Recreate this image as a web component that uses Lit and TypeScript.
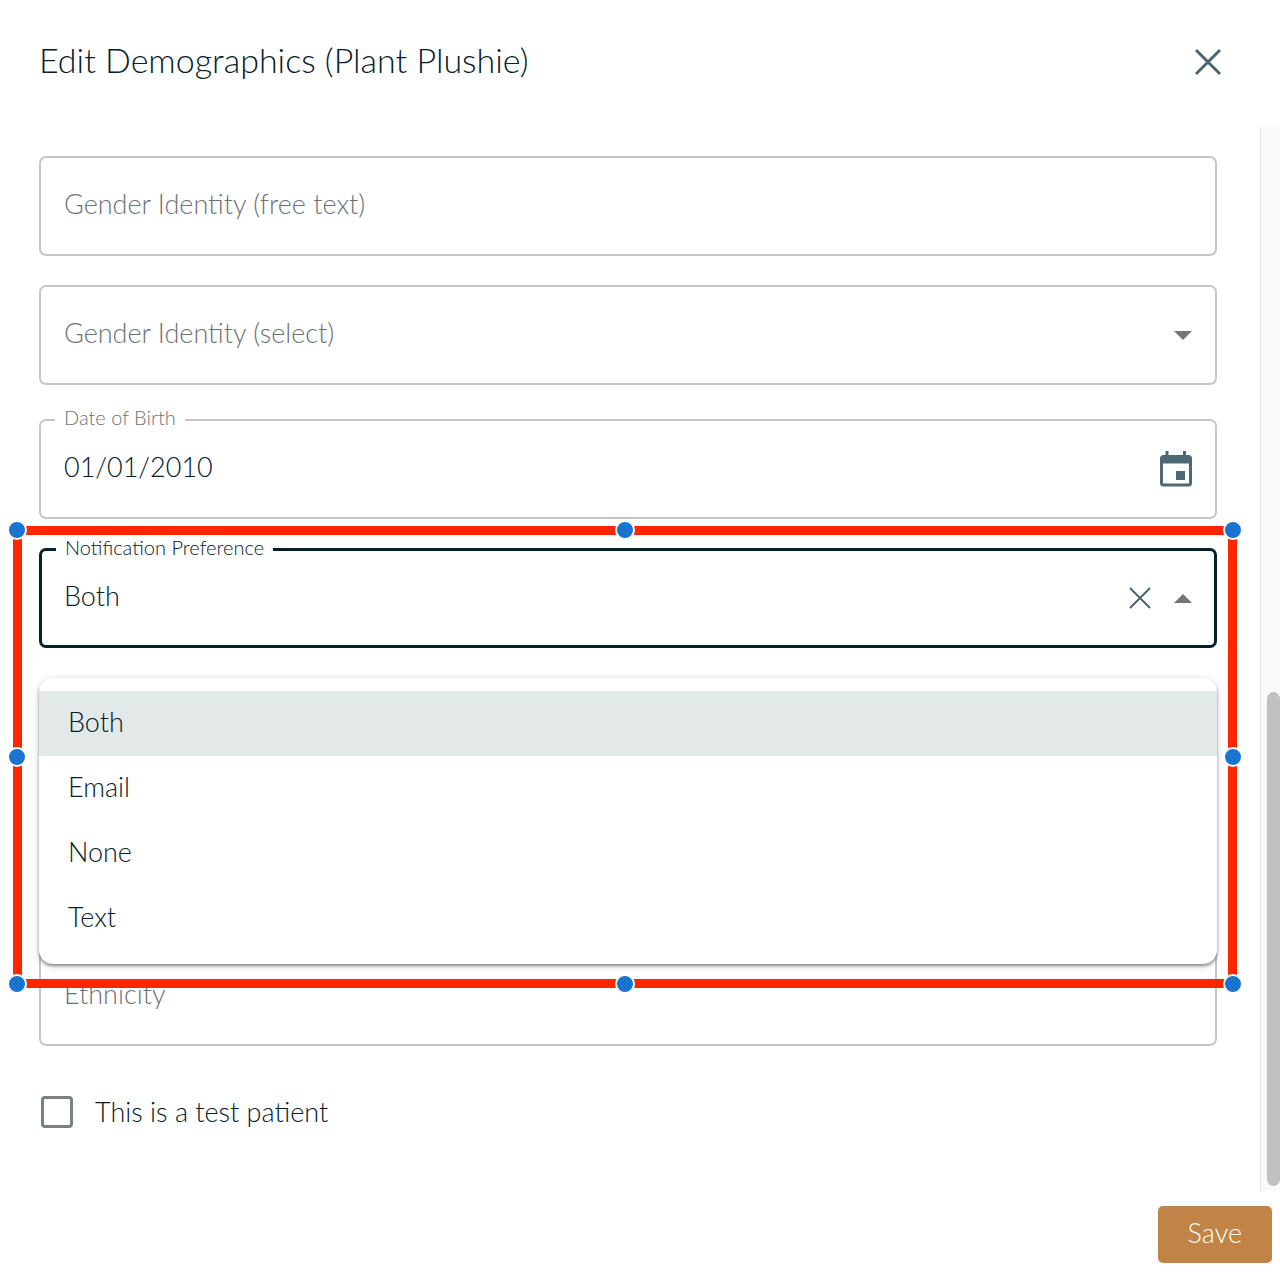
import { LitElement, html, css, svg } from "lit";
import { customElement, property, state } from "lit/decorators.js";

const closeIcon = (size: number, stroke: number) => html`<svg width=${size} height=${size} viewBox="0 0 ${size} ${size}" aria-hidden="true">
  ${svg`<path d="M${stroke - 1} ${stroke - 1}L${size - stroke + 1} ${size - stroke + 1}M${size - stroke + 1} ${stroke - 1}L${stroke - 1} ${size - stroke + 1}"
    fill="none" stroke="#4c656e" stroke-width=${stroke} />`}
</svg>`;

const arrowIcon = (up: boolean) => html`<svg width="18" height="9" viewBox="0 0 18 9" aria-hidden="true">
  <path d=${up ? "M0 9L9 0L18 9Z" : "M0 0L9 9L18 0Z"} fill="#757575" />
</svg>`;

const calendarIcon = html`<svg width="32" height="36" viewBox="0 0 32 36" aria-hidden="true">
  <path fill="#4c6872" fill-rule="evenodd"
    d="M5.500 0h3v4h14.500v-4h3v4h2.500a3.500 3.500 0 0 1 3.500 3.500v24.500a3.500 3.500 0 0 1-3.500 3.500h-25a3.500 3.500 0 0 1-3.500-3.500v-24.500a3.500 3.500 0 0 1 3.500-3.500h2zM3 12.500v20h26v-20zM16 20h9v9h-9z" />
</svg>`;

/** Highlight frame with round handles at its corners and side middles. */
@customElement("highlight-frame")
export class HighlightFrame extends LitElement {
  static styles = css`
    :host {
      display: block;
      box-sizing: border-box;
      border: 9px solid #ff2600;
      pointer-events: none;
    }
    .handle {
      position: absolute;
      width: 16px;
      height: 16px;
      border: 2px solid #fff;
      border-radius: 50%;
      background: #1a73cf;
      transform: translate(-50%, -50%);
    }
    .left { left: -5px; }
    .center { left: 50%; }
    .right { left: calc(100% + 5px); }
    .top { top: -5px; }
    .middle { top: 50%; }
    .bottom { top: calc(100% + 5px); }
  `;

  render() {
    const spots = ["top left", "top center", "top right", "middle left", "middle right", "bottom left", "bottom center", "bottom right"];
    return spots.map((spot) => html`<span class="handle ${spot}"></span>`);
  }
}

@customElement("app-root")
export class AppRoot extends LitElement {
  @property({ type: String }) patient = "Plant Plushie";
  @state() private preference = "Both";
  private readonly preferences = ["Both", "Email", "None", "Text"];

  static styles = css`
    :host {
      display: block;
      font-family: Lato, "Open Sans", sans-serif;
      font-weight: 300;
      font-size: 27px;
      line-height: 36px;
      color: #04202a;
    }
    * { box-sizing: border-box; }
    button, input, select {
      font: inherit;
      color: inherit;
      margin: 0;
      padding: 0;
      border: 0;
      background: none;
      outline: none;
      appearance: none;
    }
    button { cursor: pointer; }
    svg { display: block; }
    .dialog {
      display: flex;
      flex-direction: column;
      min-height: 100vh;
      background: #fff;
    }
    .header {
      display: flex;
      align-items: center;
      justify-content: space-between;
      padding: 40px 55px 43px 39px;
    }
    .title {
      margin: 0;
      padding-bottom: 4px;
      font-size: 34px;
      line-height: 40px;
      font-weight: 300;
    }
    .close { padding: 0 3px; }
    .body {
      flex: 1;
      display: flex;
    }
    .form {
      flex: 1;
      display: flex;
      flex-direction: column;
      gap: 29px;
      padding: 29px 43px 39px 39px;
    }
    .field {
      position: relative;
      display: flex;
      align-items: center;
      height: 100px;
      padding: 0 23px;
      border: 2px solid #c6c6c6;
      border-radius: 7px;
    }
    .field.spaced { margin-top: 5px; }
    .field.late { margin-top: 269px; }
    .field.active {
      z-index: 1;
      padding: 0 22px;
      border: 3px solid #04202a;
    }
    .control {
      flex: 1;
      min-width: 0;
      height: 36px;
      margin-bottom: 4px;
    }
    .control::placeholder { color: #6c7274; opacity: 1; }
    .control.empty { color: #6c7274; }
    .tag {
      position: absolute;
      top: -16px;
      left: 14px;
      padding: 0 9px;
      background: #fff;
      font-size: 20px;
      line-height: 24px;
      color: #6c7274;
    }
    .active .tag { color: #04202a; }
    .icons {
      display: flex;
      align-items: center;
      gap: 23px;
    }
    .menu {
      position: absolute;
      top: 127px;
      left: -3px;
      right: -3px;
      margin: 0;
      padding: 13px 0;
      list-style: none;
      background: #fff;
      border-radius: 14px;
      box-shadow: 0 2px 3px rgba(0, 0, 0, 0.4), 0 2px 10px rgba(0, 0, 0, 0.14);
    }
    .option {
      height: 65px;
      padding: 13px 29px;
      cursor: pointer;
    }
    .option.selected { background: #e3e8e8; }
    highlight-frame {
      position: absolute;
      top: -25px;
      left: -29px;
      right: -23px;
      height: 462px;
    }
    .check {
      display: flex;
      align-items: center;
      gap: 22px;
      margin-top: 19px;
      padding-left: 2px;
    }
    .box {
      width: 32px;
      height: 32px;
      border: 3px solid #7b8082;
      border-radius: 4px;
    }
    .box:checked { background: #7b8082; }
    .track {
      width: 20px;
      display: flex;
      flex-direction: column;
      justify-content: flex-end;
      padding: 0 0 5px 6px;
      border-left: 1px solid #e4e4e4;
      background: #fafafa;
    }
    .thumb {
      height: 494px;
      border-radius: 7px 0 0 7px;
      border-radius: 7px;
      background: #c1c1c1;
    }
    .footer {
      display: flex;
      justify-content: flex-end;
      padding: 15px 8px 11px;
    }
    .save {
      height: 57px;
      padding: 0 30px 3px;
      border-radius: 5px;
      background: #c08546;
      color: #fff;
    }
  `;

  render() {
    return html`
      <div class="dialog" role="dialog" aria-labelledby="title">
        <header class="header">
          <h1 class="title" id="title">Edit Demographics (${this.patient})</h1>
          <button class="close" aria-label="Close">${closeIcon(28, 3)}</button>
        </header>
        <div class="body">
          <form class="form" id="form">
            <div class="field">
              <input class="control" type="text" aria-label="Gender Identity (free text)" placeholder="Gender Identity (free text)" />
            </div>
            <div class="field">
              <select class="control empty" aria-label="Gender Identity (select)">
                <option>Gender Identity (select)</option>
              </select>
              ${arrowIcon(false)}
            </div>
            <div class="field spaced">
              <label class="tag" for="dob">Date of Birth</label>
              <input class="control" id="dob" type="text" value="01/01/2010" />
              <button type="button" aria-label="Choose date">${calendarIcon}</button>
            </div>
            <div class="field active">
              <label class="tag" for="preference">Notification Preference</label>
              <input class="control" id="preference" type="text" role="combobox" aria-expanded="true"
                aria-controls="preferences" .value=${this.preference} />
              <div class="icons">
                <button type="button" aria-label="Clear" @click=${() => (this.preference = "")}>${closeIcon(22, 2)}</button>
                <button type="button" aria-label="Close list">${arrowIcon(true)}</button>
              </div>
              <ul class="menu" id="preferences" role="listbox">
                ${this.preferences.map(
                  (name) => html`<li class="option ${name === this.preference ? "selected" : ""}" role="option"
                    aria-selected=${name === this.preference} @click=${() => (this.preference = name)}>${name}</li>`
                )}
              </ul>
              <highlight-frame></highlight-frame>
            </div>
            <div class="field late">
              <input class="control" type="text" aria-label="Ethnicity" placeholder="Ethnicity" />
            </div>
            <label class="check"><input class="box" type="checkbox" />This is a test patient</label>
          </form>
          <div class="track" aria-hidden="true"><div class="thumb"></div></div>
        </div>
        <footer class="footer">
          <button class="save" type="submit" form="form">Save</button>
        </footer>
      </div>
    `;
  }
}
